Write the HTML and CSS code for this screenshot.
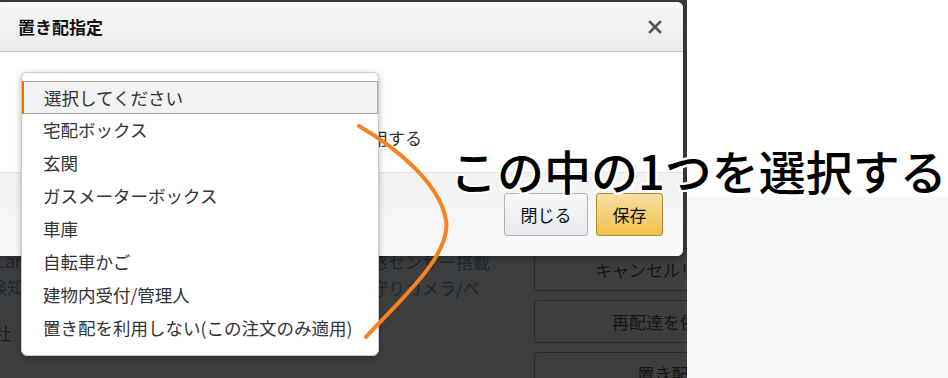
FILE: index.html
```html
<!DOCTYPE html>
<html lang="ja">
<head>
<meta charset="utf-8">
<title>置き配指定</title>
<link rel="stylesheet" href="styles.css">
</head>
<body>
<div class="screen">
  <div class="app">
    <div class="page">
      <div class="page-left">
        <p class="link">Large</p>
        <p class="link shift">検知</p>
        <p class="plain gap">社</p>
      </div>
      <div class="page-mid">
        <p class="link">人感センサー搭載</p>
        <p class="link">見守りカメラ/ベ</p>
      </div>
      <div class="page-right">
        <div class="ghost-btn">キャンセルリクエスト</div>
        <div class="ghost-btn">再配達を依頼する</div>
        <div class="ghost-btn">置き配指定</div>
      </div>
    </div>

    <div class="modal">
      <div class="modal-head">
        <h1 class="modal-title">置き配指定</h1>
        <svg class="close" width="14" height="14" viewBox="0 0 14 14"><path d="M2 2 L12 12 M12 2 L2 12" stroke="#555" stroke-width="2.6" stroke-linecap="square"/></svg>
      </div>
      <div class="modal-body">
        <div class="fake-select">選択してください</div>
        <label class="check"><span class="box"></span>この置き配指定を次回以降の注文にも使用する</label>
      </div>
      <div class="modal-foot">
        <button class="btn btn-close">閉じる</button>
        <button class="btn btn-save">保存</button>
      </div>
    </div>

    <ul class="dropdown">
      <li class="opt active">選択してください</li>
      <li class="opt">宅配ボックス</li>
      <li class="opt">玄関</li>
      <li class="opt">ガスメーターボックス</li>
      <li class="opt">車庫</li>
      <li class="opt">自転車かご</li>
      <li class="opt">建物内受付/管理人</li>
      <li class="opt">置き配を利用しない(この注文のみ適用)</li>
    </ul>
  </div>
  <div class="side">
    <div class="side-top"></div>
    <div class="side-bottom"></div>
  </div>

  <div class="callout">この中の1つを選択する</div>
  <svg class="stroke" width="948" height="378" viewBox="0 0 948 378">
    <path d="M359 126 C400 150 440 185 446 220 C452 255 400 300 366 337" fill="none" stroke="#f7821e" stroke-width="4" stroke-linecap="round"/>
  </svg>
</div>
</body>
</html>
```

FILE: styles.css
```css
* { box-sizing: border-box; }
html, body { margin: 0; padding: 0; }
body {
  width: 948px;
  height: 378px;
  overflow: hidden;
  background: #fff;
  font-family: "Noto Sans CJK JP", "Noto Sans", sans-serif;
  color: #333;
}
.screen {
  position: relative;
  width: 948px;
  height: 378px;
  display: grid;
  grid-template-columns: 687px 1fr;
}
.app {
  position: relative;
  background: #3e3e3e;
  overflow: hidden;
}
.side {
  display: grid;
  grid-template-rows: 197px 1fr;
}
.side-top { background: #fff; }
.side-bottom { background: #f4f6f8; }

/* dimmed page behind the overlay */
.page {
  display: grid;
  grid-template-columns: 354px 180px 1fr;
  padding-top: 248px;
  font-size: 17px;
}
.page p { margin: 0; line-height: 26px; white-space: nowrap; }
.page-left { margin-left: -4px; }
.page-left .shift { margin-left: -6px; }
.page-left .gap { margin-top: 20px; margin-left: -2px; }
.page-mid { padding-top: 1px; }
.link { color: #1b2633; }
.plain { color: #1a1a1a; }
.page-right {
  display: flex;
  flex-direction: column;
  gap: 9px;
}
.ghost-btn {
  width: 292px;
  height: 43px;
  border: 1px solid #2a2a2a;
  border-radius: 4px;
  display: flex;
  align-items: center;
  justify-content: center;
  color: #141414;
  white-space: nowrap;
  font-size: 17px;
}

/* modal */
.modal {
  position: absolute;
  top: 2px;
  left: -10px;
  width: 693px;
  height: 254px;
  background: #fff;
  border-radius: 6px;
  box-shadow: 0 2px 8px rgba(0,0,0,.4);
  display: flex;
  flex-direction: column;
  overflow: hidden;
}
.modal-head {
  height: 50px;
  flex: none;
  display: flex;
  align-items: center;
  justify-content: space-between;
  padding: 0 21px 0 28px;
  background: linear-gradient(#f7f7f7, #ebebeb);
  border-bottom: 1px solid #c6c6c6;
}
.modal-title {
  margin: 0;
  font-size: 17px;
  font-weight: 700;
  color: #111;
}
.modal-body {
  flex: none;
  height: 120px;
  padding: 28px 0 0 34px;
  position: relative;
}
.fake-select {
  width: 350px;
  height: 33px;
  border: 1px solid #aaa;
  border-radius: 3px;
  font-size: 17px;
  padding: 4px 12px;
}
.check {
  display: flex;
  align-items: center;
  gap: 8px;
  margin-top: 12px;
  margin-left: 20px;
  font-size: 17px;
  color: #333;
  white-space: nowrap;
}
.box {
  width: 13px;
  height: 13px;
  border: 1px solid #888;
  border-radius: 2px;
}
.modal-foot {
  flex: 1;
  display: flex;
  justify-content: flex-end;
  align-items: center;
  gap: 8px;
  padding: 0 20px 0 0;
  background: linear-gradient(#f2f2f2, #fafafa);
  border-top: 1px solid #e2e2e2;
}
.btn {
  height: 43px;
  font-family: inherit;
  font-size: 17px;
  color: #111;
  border-radius: 3px;
  padding: 0;
}
.btn-close {
  width: 84px;
  background: linear-gradient(#f7f8fa, #e7e9ec);
  border: 1px solid #adb1b8;
}
.btn-save {
  width: 67px;
  background: linear-gradient(#f7dfa5, #f0c14b);
  border: 1px solid #b48a32;
}

/* open select list */
.dropdown {
  position: absolute;
  top: 72px;
  left: 21px;
  width: 358px;
  height: 284px;
  margin: 0;
  padding: 8px 0 0;
  list-style: none;
  background: #fff;
  border: 1px solid #c9c9c9;
  border-radius: 6px;
  box-shadow: 0 2px 6px rgba(0,0,0,.3);
}
.opt {
  height: 33px;
  line-height: 31px;
  padding-left: 21px;
  font-size: 17.5px;
  color: #333;
  white-space: nowrap;
}
.opt.active {
  background: #f2f2f2;
  border: 1px solid #a8a8a8;
  border-left: 2px solid #e77600;
  line-height: 31px;
  padding-left: 20px;
}

/* annotation */
.callout {
  position: absolute;
  left: 450px;
  top: 146px;
  font-size: 47px;
  line-height: 1;
  font-weight: 500;
  color: #000;
  white-space: nowrap;
  text-shadow:
    2px 0 0 #fff, -2px 0 0 #fff, 0 2px 0 #fff, 0 -2px 0 #fff,
    2px 2px 0 #fff, -2px -2px 0 #fff, 2px -2px 0 #fff, -2px 2px 0 #fff;
}
.stroke {
  position: absolute;
  left: 0;
  top: 0;
  pointer-events: none;
}
```
